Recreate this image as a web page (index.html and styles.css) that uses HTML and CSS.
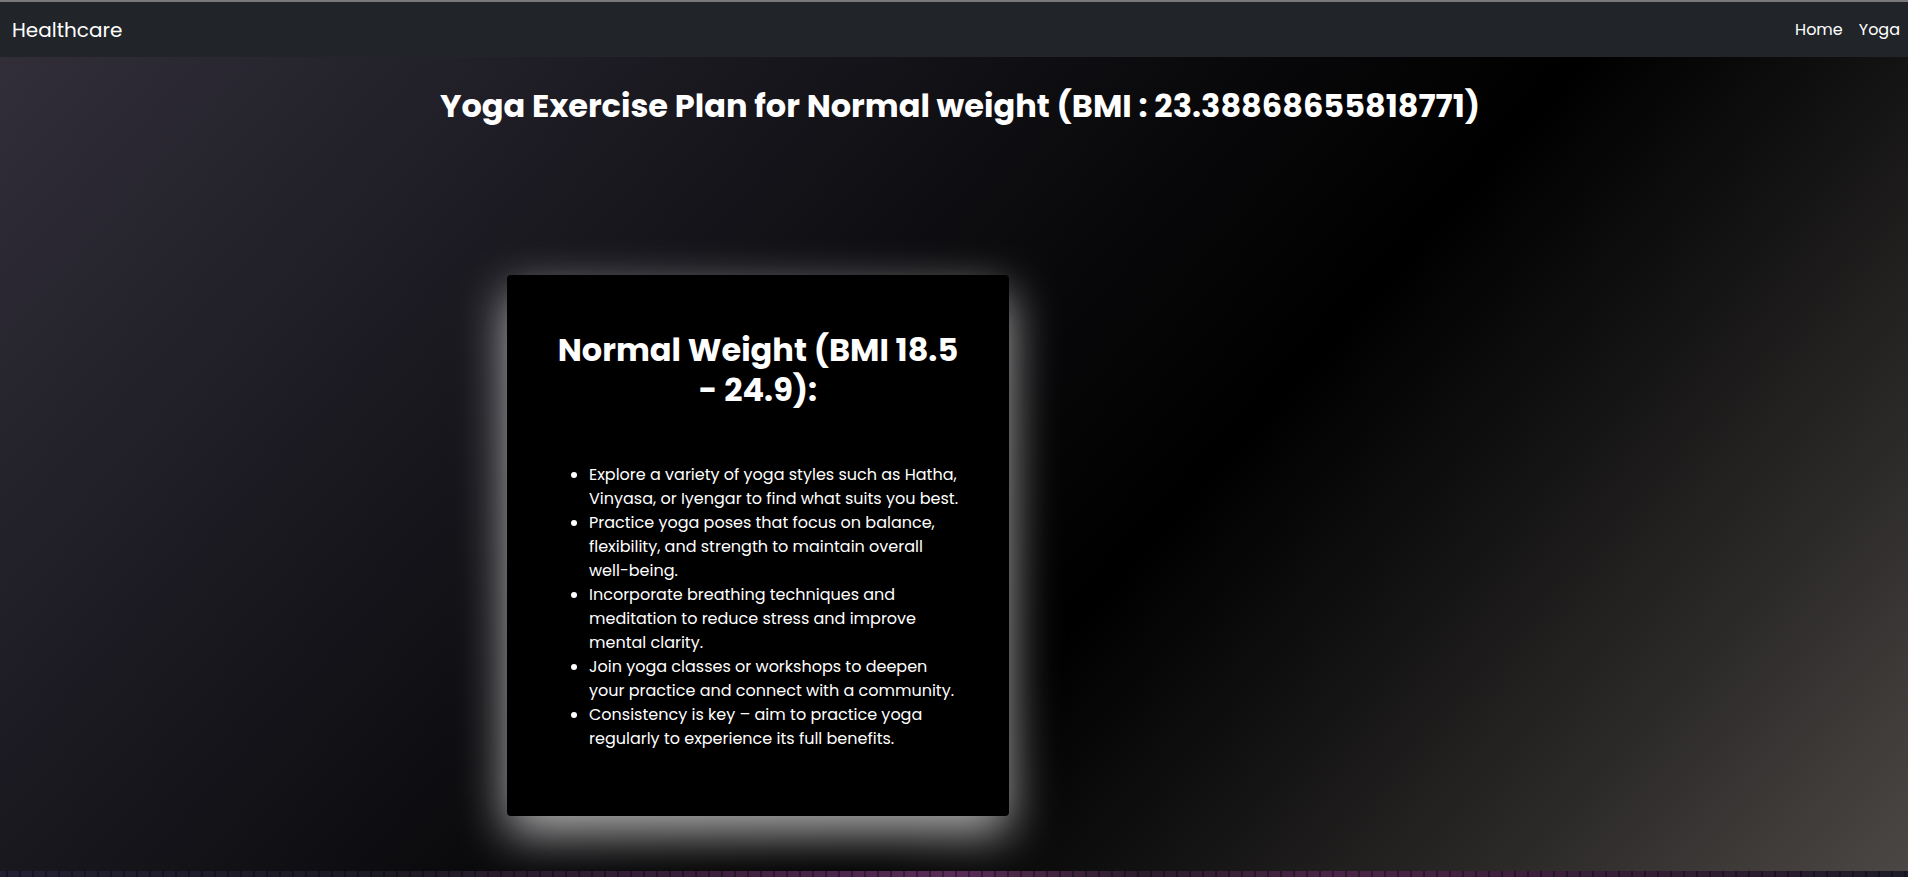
FILE: index.html
```html
<!DOCTYPE html>
<html lang="en">
<head>
<meta charset="utf-8">
<title>Healthcare - Yoga</title>
<link rel="stylesheet" href="styles.css">
</head>
<body>
<div class="topline"></div>
<nav class="navbar">
  <a class="brand" href="#">Healthcare</a>
  <ul class="nav-links">
    <li><a href="#">Home</a></li>
    <li><a href="#">Yoga</a></li>
  </ul>
</nav>
<main class="hero">
  <h1 class="page-title">Yoga Exercise Plan for Normal weight (BMI : 23.38868655818771)</h1>
  <div class="plan-row">
    <section class="plan-card">
      <h2 class="plan-heading">Normal Weight (BMI 18.5 - 24.9):</h2>
      <ul class="plan-list">
        <li>Explore a variety of yoga styles such as Hatha, Vinyasa, or Iyengar to find what suits you best.</li>
        <li>Practice yoga poses that focus on balance, flexibility, and strength to maintain overall well-being.</li>
        <li>Incorporate breathing techniques and meditation to reduce stress and improve mental clarity.</li>
        <li>Join yoga classes or workshops to deepen your practice and connect with a community.</li>
        <li>Consistency is key – aim to practice yoga regularly to experience its full benefits.</li>
      </ul>
    </section>
    <div class="plan-media"></div>
  </div>
</main>
<div class="bottom-strip"></div>
</body>
</html>
```
FILE: styles.css
```css
* { box-sizing: border-box; }
html, body { margin: 0; padding: 0; }
body {
  font-family: "Poppins", "Open Sans", "Liberation Sans", sans-serif;
  color: #fff;
  background: #000;
  height: 877px;
  overflow: hidden;
  display: flex;
  flex-direction: column;
}
.topline {
  height: 2px;
  background: #7a7a7c;
}
.navbar {
  height: 55px;
  background: #212529;
  display: flex;
  align-items: center;
  justify-content: space-between;
  padding: 0 8px 0 12px;
}
.brand {
  color: #fff;
  text-decoration: none;
  font-size: 20px;
}
.nav-links {
  list-style: none;
  margin: 0;
  padding: 0;
  display: flex;
  gap: 16px;
}
.nav-links a {
  color: #fff;
  text-decoration: none;
  font-size: 16px;
}
.hero {
  flex: 1;
  background: linear-gradient(132deg, #312e3a 0%, #23212a 16%, #17161c 30%, #08080a 48%, #000 60%, #141313 72%, #2c2a29 85%, #4b4745 100%);
  display: flex;
  flex-direction: column;
  align-items: center;
}
.page-title {
  margin: 29px 0 0;
  padding-left: 12px;
  font-size: 32px;
  font-weight: 700;
  line-height: 40px;
}
.plan-row {
  margin-top: 149px;
  width: 894px;
  display: grid;
  grid-template-columns: 502px 1fr;
}
.plan-card {
  background: #000;
  border-radius: 4px;
  padding: 55px 50px 50px;
  height: 541px;
  box-shadow: 0 18px 48px rgba(255, 255, 255, 0.68);
}
.plan-heading {
  margin: 0 0 53px;
  text-align: center;
  font-size: 32px;
  font-weight: 700;
  line-height: 40px;
}
.plan-list {
  margin: 0;
  padding-left: 32px;
  font-size: 16px;
  line-height: 24px;
}
.bottom-strip {
  height: 6px;
  background:
    repeating-linear-gradient(90deg, rgba(0,0,0,0) 0 6px, rgba(0,0,0,0.35) 6px 8px, rgba(0,0,0,0) 8px 13px),
    linear-gradient(90deg, #221f33 0%, #1c1a22 20%, #3a1e3c 37%, #5a2b58 50%, #2a1c2a 60%, #4a2448 70%, #3a1e3a 82%, #1e1c28 100%);
}
```
